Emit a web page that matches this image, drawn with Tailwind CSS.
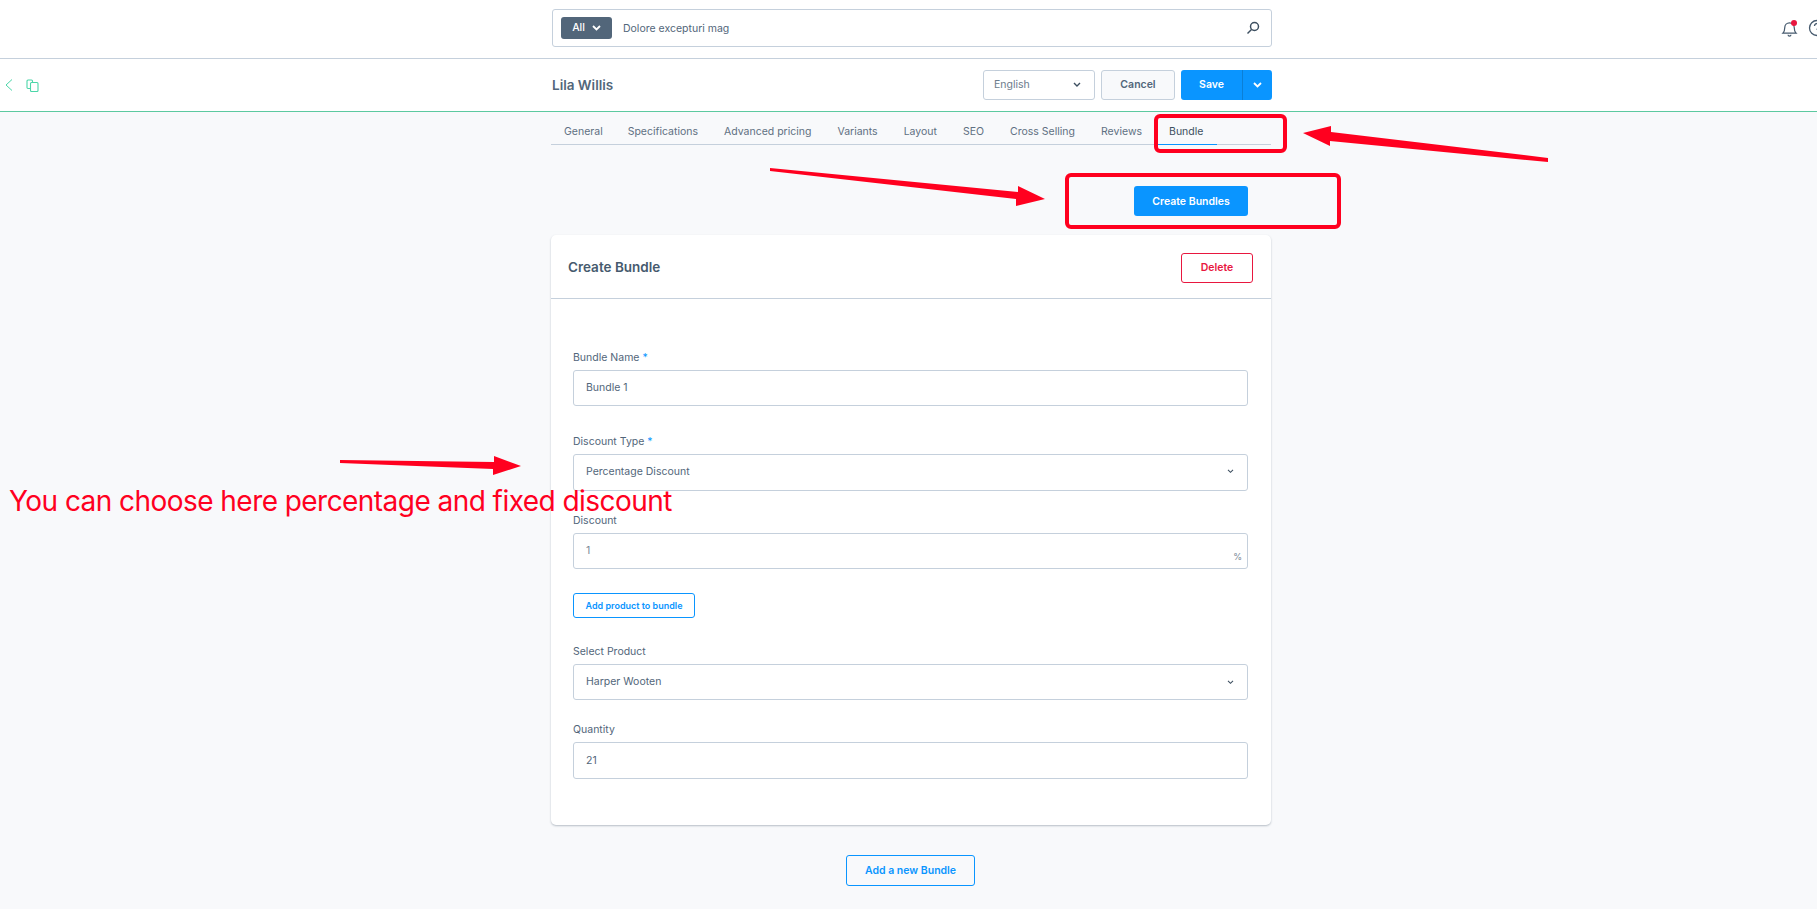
<!DOCTYPE html>
<html lang="en">
  <head>
    <meta charset="UTF-8" />
    <meta name="viewport" content="width=device-width, initial-scale=1.0" />
    <script src="https://cdn.jsdelivr.net/npm/@tailwindcss/browser@4"></script>
    <title>Create Bundle</title>
  </head>
  <body class="relative w-[1817px] h-[909px] overflow-hidden bg-[#f8f9fb] font-['Inter',sans-serif] text-[10.5px] text-[#52667a]">
    <!-- search bar -->
    <header class="h-[59px] bg-white border-b border-[#c5d0dc] flex">
      <div class="w-[552px]"></div>
      <div class="w-[720px] h-[38px] mt-[9px] border border-[#c5d0dc] rounded-[3px] flex items-center pl-[8px] pr-[11px]">
        <button class="w-[51px] h-[22px] bg-[#52667a] rounded-[3px] text-white font-medium flex items-center justify-center gap-[7px]">
          All
          <svg width="9" height="6" viewBox="0 0 9 6" fill="none" stroke="white" stroke-width="1.8"><path d="M1 1l3.5 3.5L8 1" /></svg>
        </button>
        <span class="ml-[11px] pt-[1px] flex-1">Dolore excepturi mag</span>
        <svg width="14" height="14" viewBox="0 0 14 14" fill="none" stroke="#3d4f60" stroke-width="1.5"><circle cx="8.5" cy="5.5" r="4" /><path d="M5.5 8.5L1.5 12.5" /></svg>
      </div>
      <div class="flex-1 relative">
        <svg class="absolute left-[509px] top-[20px]" width="17" height="17" viewBox="0 0 18 18" fill="none" stroke="#465a6e" stroke-width="1.3"><path d="M2 14c1.500-1.500 2-2.500 2-6a5 5 0 0 1 10 0c0 3.500.5 4.500 2 6z" /><path d="M7.500 15.500a1.500 1.500 0 0 0 3 0" /></svg>
        <span class="absolute left-[519px] top-[20px] w-[6px] h-[6px] rounded-full bg-[#e8173f]"></span>
        <svg class="absolute left-[536px] top-[19px]" width="18" height="18" viewBox="0 0 18 18" fill="none" stroke="#465a6e" stroke-width="1.3"><circle cx="9" cy="9" r="7.500" /><path d="M6.500 7a2.500 2.500 0 1 1 3.500 2.300c-.7.3-1 .7-1 1.500" /></svg>
      </div>
    </header>

    <!-- page title row -->
    <div class="h-[53px] bg-white border-b border-[#5cc9a0] flex items-center">
      <div class="w-[552px] flex items-center pl-[5px] gap-[13px]">
        <svg width="8" height="12" viewBox="0 0 8 12" fill="none" stroke="#4bd6a8" stroke-width="1"><path d="M7 .5L1 6l6 5.500" /></svg>
        <svg width="13" height="13" viewBox="0 0 13 13" fill="none" stroke="#4bd6a8" stroke-width="1.100"><path d="M4 9.500H2a1 1 0 0 1-1-1V2a1 1 0 0 1 1-1h3.500a1 1 0 0 1 1 1v1.500" /><rect x="4.500" y="3.500" width="7.500" height="9" rx="1" /></svg>
      </div>
      <div class="w-[720px] flex items-center justify-between">
        <h1 class="text-[13.5px] font-semibold text-[#52667a]">Lila Willis</h1>
        <div class="flex items-center">
          <div class="w-[112px] h-[30px] bg-white border border-[#c5d0dc] rounded-[3px] flex items-center justify-between pl-[10px] pr-[13px] text-[#6c7c8c]">
            <span class="-mt-[1px]">English</span>
            <svg width="8" height="6" viewBox="0 0 8 6" fill="none" stroke="#3d4f60" stroke-width="1.400"><path d="M1 1l3 3 3-3" /></svg>
          </div>
          <button class="ml-[6px] w-[74px] h-[30px] bg-[#f8f9fb] border border-[#c5d0dc] rounded-[3px] font-semibold text-[#52667a]">Cancel</button>
          <div class="ml-[6px] w-[91px] h-[30px] bg-[#0a95ff] rounded-[3px] flex text-white font-semibold">
            <button class="w-[61px]">Save</button>
            <button class="flex-1 border-l border-[#0b7fd6] flex items-center justify-center">
              <svg width="9" height="6" viewBox="0 0 9 6" fill="none" stroke="white" stroke-width="1.800"><path d="M1 1l3.500 3.500L8 1" /></svg>
            </button>
          </div>
        </div>
      </div>
    </div>

    <main class="ml-[551px] w-[720px]">
      <!-- tabs -->
      <nav class="h-[33px] border-b border-[#c5d0dc] flex text-[#5f7082] whitespace-nowrap">
        <a class="h-[33px] pt-[6px] px-[13px] flex items-center">General</a>
        <a class="h-[33px] pt-[6px] px-[13px] flex items-center -ml-[1px]">Specifications</a>
        <a class="h-[33px] pt-[6px] px-[13px] flex items-center">Advanced pricing</a>
        <a class="h-[33px] pt-[6px] px-[13px] flex items-center">Variants</a>
        <a class="h-[33px] pt-[6px] px-[13px] flex items-center">Layout</a>
        <a class="h-[33px] pt-[6px] px-[13px] flex items-center">SEO</a>
        <a class="h-[33px] pt-[6px] px-[13px] flex items-center">Cross Selling</a>
        <a class="h-[33px] pt-[6px] px-[13px] flex items-center">Reviews</a>
        <a class="h-[33px] pt-[7px] px-[14px] flex items-center text-[#3d4f60] border-b border-[#0a95ff]">Bundle</a>
      </nav>

      <div class="h-[90px] flex justify-end pt-[41px] pr-[23px]">
        <button class="w-[114px] h-[30px] pt-[1px] bg-[#0a95ff] rounded-[3px] text-white font-semibold">Create Bundles</button>
      </div>

      <!-- bundle card -->
      <section class="h-[590px] bg-white rounded-[5px] shadow-[0_1px_2px_rgba(60,80,100,0.35)]">
        <div class="h-[64px] pt-[2px] border-b border-[#c5d0dc] flex items-center justify-between pl-[17px] pr-[18px]">
          <h2 class="text-[13.5px] font-semibold text-[#465a6e]">Create Bundle</h2>
          <button class="w-[72px] h-[30px] border border-[#e8173f] rounded-[3px] text-[#e8173f] font-semibold">Delete</button>
        </div>
        <div class="pl-[22px] pr-[23px] pt-[50px]">
          <label class="block h-[21px] leading-[18px]">Bundle Name <span class="text-[#0a95ff]">*</span></label>
          <div class="h-[36px] border border-[#c5d0dc] rounded-[3px] flex items-center px-[12px]">Bundle 1</div>

          <label class="block mt-[27px] h-[21px] leading-[18px]">Discount Type <span class="text-[#0a95ff]">*</span></label>
          <div class="h-[37px] pb-[2px] border border-[#c5d0dc] rounded-[3px] flex items-center justify-between pl-[12px] pr-[13px]">
            Percentage Discount
            <svg width="7" height="5" viewBox="0 0 8 6" fill="none" stroke="#3d4f60" stroke-width="1.300"><path d="M1 1l3 3 3-3" /></svg>
          </div>

          <label class="block mt-[21px] h-[21px] leading-[18px]">Discount</label>
          <div class="relative h-[36px] border border-[#c5d0dc] rounded-[3px] flex items-center px-[12px] text-[#7a8896]">
            1
            <span class="absolute right-[5px] bottom-[5px] text-[9px]">%</span>
          </div>

          <button class="block mt-[24px] w-[122px] h-[25px] border border-[#0a95ff] rounded-[3px] text-[#0a95ff] text-[9px] font-semibold">Add product to bundle</button>

          <label class="block mt-[25px] h-[21px] leading-[18px]">Select Product</label>
          <div class="h-[36px] border border-[#c5d0dc] rounded-[3px] flex items-center justify-between pl-[12px] pr-[13px]">
            Harper Wooten
            <svg width="7" height="5" viewBox="0 0 8 6" fill="none" stroke="#3d4f60" stroke-width="1.300"><path d="M1 1l3 3 3-3" /></svg>
          </div>

          <label class="block mt-[21px] h-[21px] leading-[18px]">Quantity</label>
          <div class="h-[37px] border border-[#c5d0dc] rounded-[3px] flex items-center px-[12px]">21</div>
        </div>
      </section>

      <div class="flex justify-center mt-[30px] -ml-[1px]">
        <button class="w-[129px] h-[31px] border border-[#0a95ff] rounded-[3px] text-[#0a95ff] font-semibold">Add a new Bundle</button>
      </div>
    </main>

    <!-- red annotations drawn on top of the screenshot -->
    <svg class="absolute left-0 top-0 pointer-events-none" width="1817" height="909" fill="#ff001f">
      <polygon points="1548,158 1331,132 1331,126 1303,133 1330,146 1330,141 1548,162" />
      <polygon points="770,168 1018,192 1018,186 1045,199 1016,206 1016,199 770,171" />
      <polygon points="340,460 494,462 494,456 521,466 493,475 493,469 340,463" />
    </svg>
    <div class="absolute left-[1154px] top-[114px] w-[133px] h-[39px] border-[4px] border-[#ff001f] rounded-[6px]"></div>
    <div class="absolute left-[1065px] top-[173px] w-[276px] h-[56px] border-[4px] border-[#ff001f] rounded-[6px]"></div>
    <p class="absolute left-[9px] top-[484px] text-[28px] leading-[34px] tracking-[-0.55px] text-[#ff001f] whitespace-nowrap">You can choose here percentage and fixed discount</p>
  </body>
</html>
